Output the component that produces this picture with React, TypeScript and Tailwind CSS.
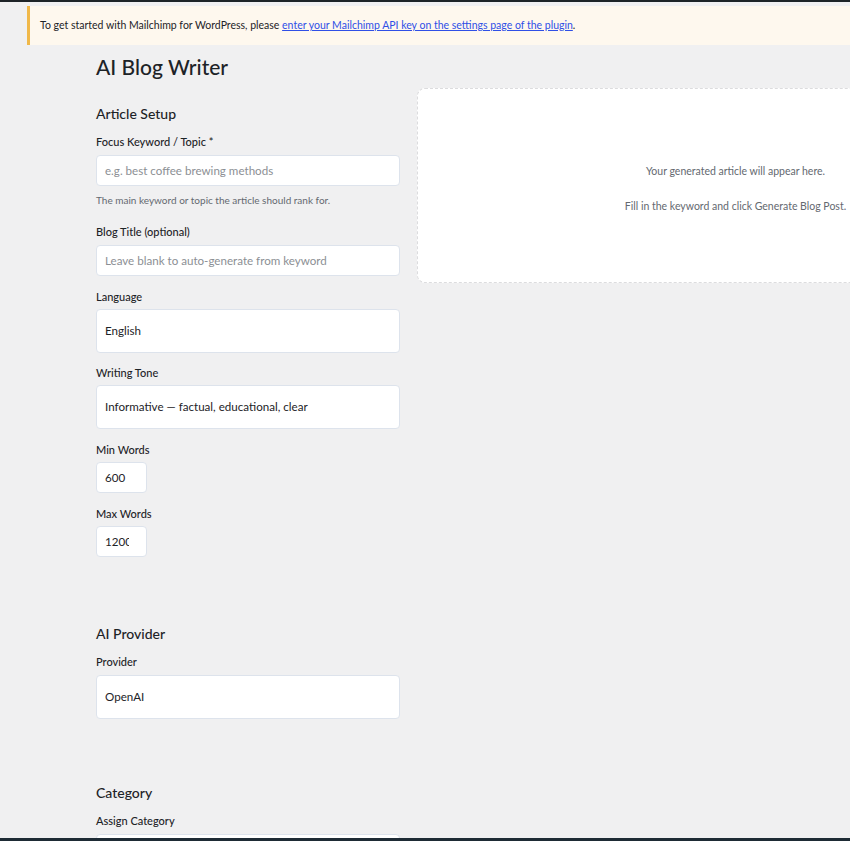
const font = { fontFamily: '"Lato", "Noto Sans", sans-serif' };

const Label = ({ children, gap = "mb-[4px]" }: { children: React.ReactNode; gap?: string }) => (
  <label className={`block text-[11px] leading-[16px] font-medium text-[#1d2327] ${gap}`}>
    {children}
  </label>
);

const inputCls =
  "block w-full h-[31px] px-[8px] bg-white border border-[#dde3ec] rounded-[4px] text-[11.6px] text-[#1d2327] placeholder:text-[#8c8f94] outline-none";

const selectCls =
  "block w-full h-[44px] px-[8px] bg-white border border-[#dde3ec] rounded-[4px] text-[11.6px] text-[#1d2327] appearance-none outline-none";

const numberCls =
  "block w-[51px] h-[31px] pl-[8px] pr-[2px] bg-white border border-[#dde3ec] rounded-[4px] text-[11.6px] text-[#1d2327] outline-none";

const SectionTitle = ({ children }: { children: React.ReactNode }) => (
  <h2 className="text-[14px] leading-[20px] font-medium text-[#1d2327] mb-[10px]">{children}</h2>
);

export default function App() {
  return (
    <div
      className="relative w-[850px] h-[841px] overflow-hidden bg-[#f0f0f1] flex flex-col"
      style={font}
    >
      <div className="h-[2px] bg-[#1d2327] shrink-0" />

      <div className="mt-[4px] ml-[27px] h-[39px] shrink-0 bg-[#fef8ee] border-l-[3px] border-[#f0b849] flex items-center pl-[10px]">
        <p className="text-[10.5px] text-[#1d2327] whitespace-nowrap">
          To get started with Mailchimp for WordPress, please{" "}
          <a href="#" className="text-[#2f4fe6] underline">
            enter your Mailchimp API key on the settings page of the plugin
          </a>
          .
        </p>
      </div>

      <h1 className="ml-[96px] mt-[8px] text-[21px] leading-[28px] font-medium text-[#1d2327]">
        AI Blog Writer
      </h1>

      <div className="flex items-start gap-[17px] pl-[96px] mt-[7px]">
        <div className="w-[304px] shrink-0 flex flex-col pt-[16px]">
          <SectionTitle>Article Setup</SectionTitle>

          <Label gap="mb-[5px]">Focus Keyword / Topic *</Label>
          <input className={inputCls} placeholder="e.g. best coffee brewing methods" />
          <p className="mt-[7px] text-[10px] leading-[14px] text-[#646970]">
            The main keyword or topic the article should rank for.
          </p>

          <div className="mt-[17px]">
            <Label gap="mb-[5px]">Blog Title (optional)</Label>
            <input className={inputCls} placeholder="Leave blank to auto-generate from keyword" />
          </div>

          <div className="mt-[13px]">
            <Label>Language</Label>
            <select className={selectCls} defaultValue="English">
              <option>English</option>
            </select>
          </div>

          <div className="mt-[12px]">
            <Label>Writing Tone</Label>
            <select className={selectCls} defaultValue="informative">
              <option value="informative">Informative — factual, educational, clear</option>
            </select>
          </div>

          <div className="mt-[13px]">
            <Label>Min Words</Label>
            <input type="number" className={numberCls} defaultValue={600} />
          </div>

          <div className="mt-[13px]">
            <Label>Max Words</Label>
            <input type="number" className={numberCls} defaultValue={1200} />
          </div>

          <div className="mt-[67px]">
            <SectionTitle>AI Provider</SectionTitle>
            <Label gap="mb-[5px]">Provider</Label>
            <select className={selectCls} defaultValue="openai">
              <option value="openai">OpenAI</option>
            </select>
          </div>

          <div className="mt-[64px]">
            <SectionTitle>Category</SectionTitle>
            <Label gap="mb-[5px]">Assign Category</Label>
            <select className={selectCls} defaultValue="">
              <option value=""></option>
            </select>
          </div>
        </div>

        <div className="w-[637px] h-[195px] shrink-0 bg-white border border-dashed border-[#dcdcde] rounded-[8px] flex flex-col items-center justify-center gap-[19px] pt-[6px]">
          <p className="text-[10.5px] leading-[16px] text-[#646970]">
            Your generated article will appear here.
          </p>
          <p className="text-[10.5px] leading-[16px] text-[#646970]">
            Fill in the keyword and click Generate Blog Post.
          </p>
        </div>
      </div>

      <div className="absolute bottom-0 left-0 right-0 h-[3px] bg-[#1e2b35]" />
    </div>
  );
}
